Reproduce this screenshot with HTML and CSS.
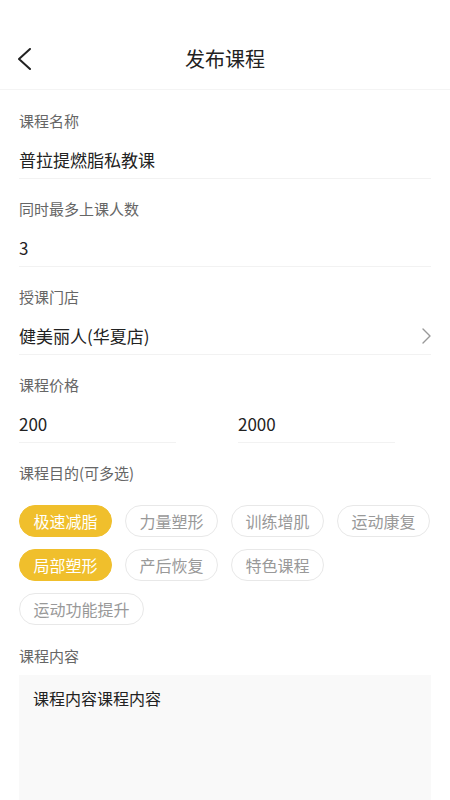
FILE: index.html
```html
<!DOCTYPE html>
<html lang="zh-CN">
<head>
    <meta charset="UTF-8">
    <meta name="viewport" content="width=device-width, initial-scale=1.0">
    <title>发布课程</title>
    <link rel="stylesheet" href="styles.css">
</head>
<body>
    <header class="nav-bar">
        <svg class="nav-back" width="14" height="22" viewBox="0 0 14 22">
            <polyline points="12,1 1,11 12,21" fill="none" stroke="#222" stroke-width="2" stroke-linecap="round" stroke-linejoin="round"/>
        </svg>
        <h1 class="nav-title">发布课程</h1>
    </header>

    <main class="form">
        <section class="field">
            <div class="field-label">课程名称</div>
            <div class="field-value">普拉提燃脂私教课</div>
        </section>

        <section class="field">
            <div class="field-label">同时最多上课人数</div>
            <div class="field-value">3</div>
        </section>

        <section class="field">
            <div class="field-label">授课门店</div>
            <div class="field-value field-select">
                <span>健美丽人(华夏店)</span>
                <svg width="9" height="16" viewBox="0 0 9 16">
                    <polyline points="1,1 8,8 1,15" fill="none" stroke="#999" stroke-width="1.4" stroke-linecap="round" stroke-linejoin="round"/>
                </svg>
            </div>
        </section>

        <section class="field">
            <div class="field-label">课程价格</div>
            <div class="price-row">
                <div class="field-value">200</div>
                <div class="field-value">2000</div>
            </div>
        </section>

        <section class="field">
            <div class="field-label">课程目的(可多选)</div>
            <div class="tag-list">
                <span class="tag active">极速减脂</span>
                <span class="tag">力量塑形</span>
                <span class="tag">训练增肌</span>
                <span class="tag">运动康复</span>
                <span class="tag active">局部塑形</span>
                <span class="tag">产后恢复</span>
                <span class="tag">特色课程</span>
                <span class="tag">运动功能提升</span>
            </div>
        </section>

        <section class="field field-content">
            <div class="field-label">课程内容</div>
            <div class="content-box">课程内容课程内容</div>
        </section>
    </main>
</body>
</html>
```

FILE: styles.css
```css
body {
    font-family: "Noto Sans CJK SC", "Noto Sans", sans-serif;
    background-color: #fff;
    color: #222;
    margin: 0;
}
.nav-bar {
    display: grid;
    grid-template-columns: 1fr auto 1fr;
    align-items: center;
    height: 60px;
    padding-top: 29px;
    border-bottom: 1px solid #f4f4f4;
}
.nav-back {
    margin-left: 18px;
}
.nav-title {
    margin: 0;
    font-size: 20px;
    font-weight: normal;
    color: #222;
    line-height: 28px;
}
.form {
    padding: 1px 19px 0;
}
.field {
    padding-top: 20px;
}
.field-label {
    font-size: 15px;
    line-height: 20px;
    color: #666;
}
.field-value {
    margin-top: 17px;
    font-size: 17px;
    line-height: 24px;
    padding-bottom: 6px;
    border-bottom: 1px solid #f2f2f2;
    color: #222;
}
.field-select {
    display: flex;
    justify-content: space-between;
    align-items: center;
}
.price-row {
    display: grid;
    grid-template-columns: 157px 157px;
    column-gap: 62px;
}
.tag-list {
    display: flex;
    flex-wrap: wrap;
    gap: 12px 13px;
    margin-top: 22px;
}
.tag {
    height: 30px;
    line-height: 30px;
    padding: 0 13.5px;
    font-size: 16px;
    color: #999;
    border: 1px solid #e8e8e8;
    border-radius: 16px;
}
.tag.active {
    background-color: #f0bf2c;
    border-color: #f0bf2c;
    color: #fff;
}
.field-content {
    padding-top: 21px;
}
.content-box {
    margin-top: 9px;
    height: 103px;
    padding: 11px 14px;
    background-color: #f9f9f9;
    font-size: 16px;
    line-height: 24px;
    color: #222;
}
```
